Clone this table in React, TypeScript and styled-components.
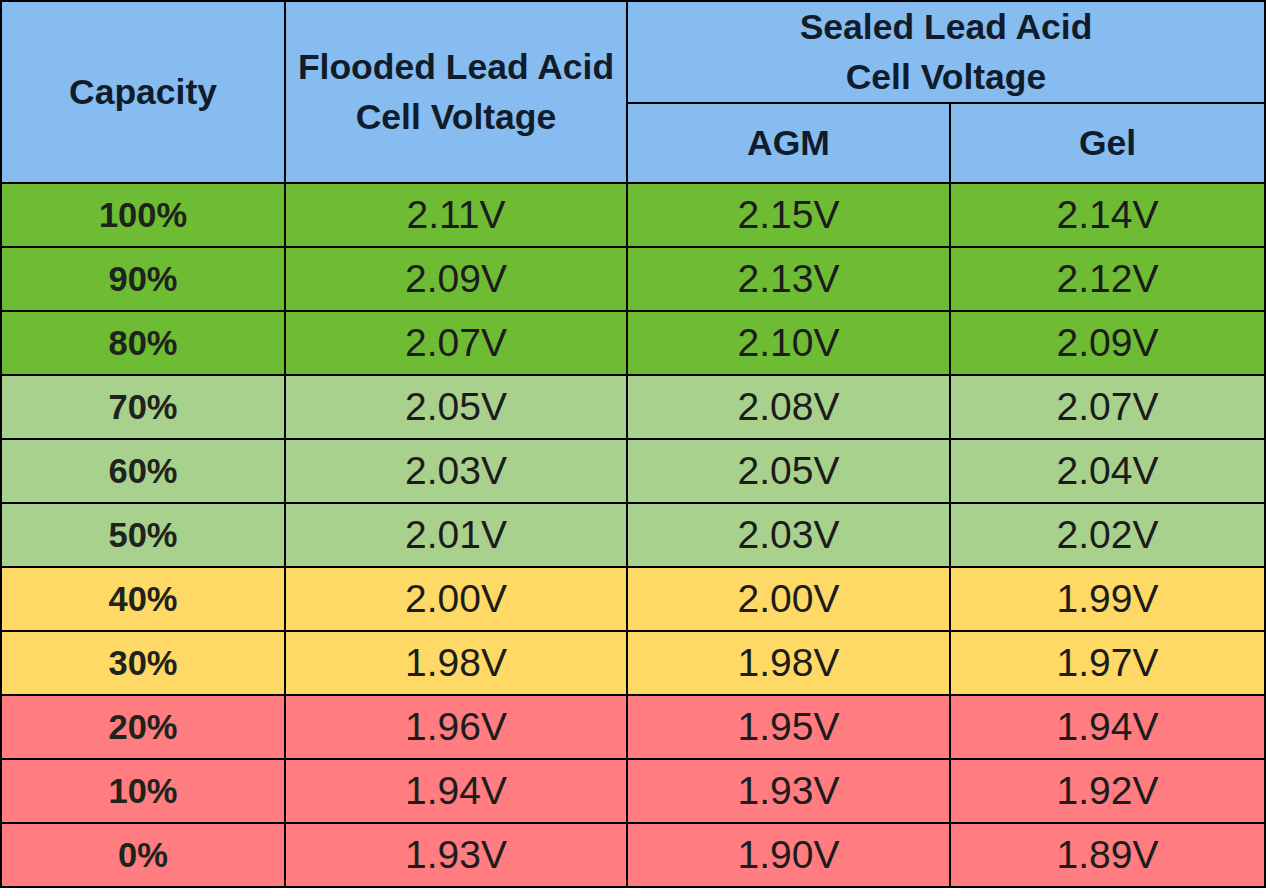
import styled, { createGlobalStyle } from 'styled-components';

type Band = 'high' | 'mid' | 'low' | 'empty';

const bandColors: Record<Band, string> = {
  high: '#6ebb34',
  mid: '#a9d18e',
  low: '#ffd966',
  empty: '#ff7c80',
};

const rows: { capacity: string; flooded: string; agm: string; gel: string; band: Band }[] = [
  { capacity: '100%', flooded: '2.11V', agm: '2.15V', gel: '2.14V', band: 'high' },
  { capacity: '90%', flooded: '2.09V', agm: '2.13V', gel: '2.12V', band: 'high' },
  { capacity: '80%', flooded: '2.07V', agm: '2.10V', gel: '2.09V', band: 'high' },
  { capacity: '70%', flooded: '2.05V', agm: '2.08V', gel: '2.07V', band: 'mid' },
  { capacity: '60%', flooded: '2.03V', agm: '2.05V', gel: '2.04V', band: 'mid' },
  { capacity: '50%', flooded: '2.01V', agm: '2.03V', gel: '2.02V', band: 'mid' },
  { capacity: '40%', flooded: '2.00V', agm: '2.00V', gel: '1.99V', band: 'low' },
  { capacity: '30%', flooded: '1.98V', agm: '1.98V', gel: '1.97V', band: 'low' },
  { capacity: '20%', flooded: '1.96V', agm: '1.95V', gel: '1.94V', band: 'empty' },
  { capacity: '10%', flooded: '1.94V', agm: '1.93V', gel: '1.92V', band: 'empty' },
  { capacity: '0%', flooded: '1.93V', agm: '1.90V', gel: '1.89V', band: 'empty' },
];

export default function App() {
  return (
    <>
      <GlobalStyle />
      <Table>
        <colgroup>
          <col style={{ width: 284 }} />
          <col style={{ width: 342 }} />
          <col style={{ width: 323 }} />
          <col />
        </colgroup>
        <thead>
          <HeadRow $height={101}>
            <HeadCell rowSpan={2}>Capacity</HeadCell>
            <HeadCell rowSpan={2}>
              Flooded Lead Acid
              <br />
              Cell Voltage
            </HeadCell>
            <HeadCell colSpan={2}>
              Sealed Lead Acid
              <br />
              Cell Voltage
            </HeadCell>
          </HeadRow>
          <HeadRow $height={80}>
            <HeadCell>AGM</HeadCell>
            <HeadCell>Gel</HeadCell>
          </HeadRow>
        </thead>
        <tbody>
          {rows.map((row) => (
            <BodyRow key={row.capacity} $band={row.band}>
              <CapacityCell>{row.capacity}</CapacityCell>
              <ValueCell>{row.flooded}</ValueCell>
              <ValueCell>{row.agm}</ValueCell>
              <ValueCell>{row.gel}</ValueCell>
            </BodyRow>
          ))}
        </tbody>
      </Table>
    </>
  );
}

const GlobalStyle = createGlobalStyle`
  html, body {
    margin: 0;
    padding: 0;
    background: #ffffff;
  }
  body {
    font-family: "Liberation Sans", Arial, sans-serif;
  }
`;

const Table = styled.table`
  width: 1266px;
  border-collapse: collapse;
  table-layout: fixed;
  border: 2px solid #000;
  margin: 0;
`;

const HeadRow = styled.tr<{ $height: number }>`
  height: ${(p) => p.$height}px;
  background: #86bcef;
`;

const HeadCell = styled.th`
  border: 2px solid #000;
  padding: 0;
  font-size: 35.5px;
  font-weight: 700;
  line-height: 50px;
  color: #111c2b;
  text-align: center;
  vertical-align: middle;
`;

const BodyRow = styled.tr<{ $band: Band }>`
  height: 64px;
  background: ${(p) => bandColors[p.$band]};
`;

const CapacityCell = styled.td`
  border: 2px solid #000;
  padding: 0;
  font-size: 34.5px;
  font-weight: 700;
  color: #1e231c;
  text-align: center;
  vertical-align: middle;
`;

const ValueCell = styled.td`
  border: 2px solid #000;
  padding: 0;
  font-size: 39px;
  font-weight: 400;
  color: #1c1c1c;
  text-align: center;
  vertical-align: middle;
`;
